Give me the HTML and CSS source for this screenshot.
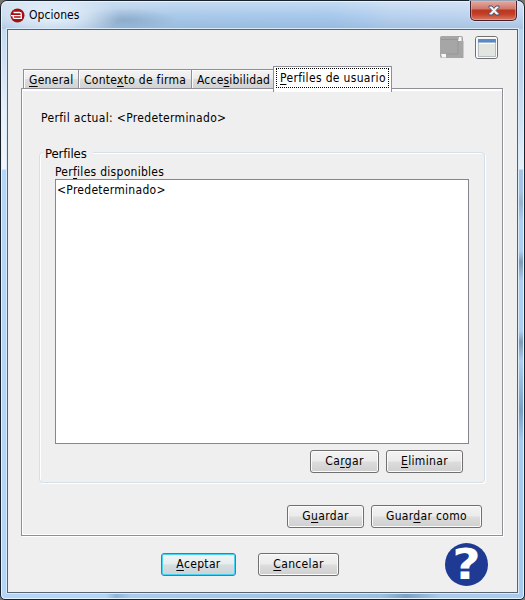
FILE: index.html
```html
<!DOCTYPE html>
<html lang="es">
<head>
<meta charset="utf-8">
<title>Opciones</title>
<link rel="stylesheet" href="styles.css">
</head>
<body>
<div class="window">
  <header class="titlebar">
    <svg class="app-icon" width="15" height="15" viewBox="0 0 15 15"><circle cx="7.5" cy="7.5" r="7" fill="#a50f12"/><path d="M3.5 4.500h6q1.800 0 1.800 1.500v4.300H4.500q-1.400 0-1.400-1.300 0-1.400 1.400-1.400h7M1 7.600h3" fill="none" stroke="#fff" stroke-width="1.300"/></svg>
    <h1 class="title"><span>Opciones</span></h1>
    <button class="close" aria-label="Cerrar"><svg width="12" height="11" viewBox="0 0 12 11"><path d="M1 1h3l2 2.400L8 1h3v1.400L8 5.500l3 3.100V10H8L6 7.700 4 10H1V8.600l3-3.100-3-3.100z" fill="#f5f5f5" stroke="#46536b"/></svg></button>
  </header>
  <main class="client">
    <div class="tools">
      <svg width="24" height="23" viewBox="0 0 24 23"><rect width="23" height="22" rx="2" fill="#a4a4a4"/><path d="M0 17.500V3q0-3 3-3h15v5h5.500v17H6v-4.500z" fill="#a6a6a6"/><path d="M1 3.500h17v14.500H6" fill="none" stroke="#969696"/><path d="M19 1h2.500v4H18zM1 18h5v3.500H2z" fill="#f7f7f7"/></svg>
      <svg width="23" height="23" viewBox="0 0 23 23"><rect x=".5" y=".5" width="22" height="22" rx="2.500" fill="#f3f3f3" stroke="#707070"/><rect x="1.500" y="1.500" width="20" height="20" rx="1.500" fill="none" stroke="#fcfcfc"/><rect x="3.500" y="3.500" width="17" height="17" fill="#e2e5e0" stroke="#b7bdc2"/><path d="M3 3h18v3.500H3z" fill="#5b8bc7"/><path d="M4 7.500h16" stroke="#fff"/></svg>
    </div>
    <nav class="tabs">
      <div class="tab general"><span><u>G</u>eneral</span></div>
      <div class="tab contexto"><span>Conte<u>x</u>to de firma</span></div>
      <div class="tab acces"><span>Acce<u>s</u>ibilidad</span></div>
      <div class="tab active"><span><u>P</u>erfiles de usuario</span></div>
    </nav>
    <section class="pane">
      <p class="current">Perfil actual: &lt;Predeterminado&gt;</p>
      <div class="group">
        <h2 class="legend"><span>Perfiles</span></h2>
        <p class="list-label"><span>Per<u>f</u>iles disponibles</span></p>
        <div class="list"><span>&lt;Predeterminado&gt;</span></div>
        <div class="row">
          <button class="btn load"><span>Ca<u>r</u>gar</span></button>
          <button class="btn delete"><span><u>E</u>liminar</span></button>
        </div>
      </div>
      <div class="row save-row">
        <button class="btn save"><span>G<u>u</u>ardar</span></button>
        <button class="btn save-as"><span>Guar<u>d</u>ar como</span></button>
      </div>
    </section>
    <footer class="footer">
      <button class="btn accept"><span><u>A</u>ceptar</span></button>
      <button class="btn cancel"><span><u>C</u>ancelar</span></button>
      <div class="help"><span>?</span></div>
    </footer>
  </main>
</div>
</body>
</html>
```
FILE: styles.css
```css
* { box-sizing: border-box; }
body {
  margin: 0;
  background: #77736f;
  color: #000;
  font: 12px/15px "DejaVu Sans Condensed", "DejaVu Sans", sans-serif;
  font-stretch: condensed;
  letter-spacing: .28px;
}
h1, h2, p { margin: 0; font-size: 12px; font-weight: normal; }
u { text-decoration: underline; text-underline-offset: 2px; text-decoration-thickness: 1px; text-decoration-skip-ink: none; }
.window {
  width: 525px;
  height: 600px;
  padding: 0 6px 6px;
  border: 1px solid #18222d;
  border-radius: 7px 7px 5px 5px;
  box-shadow: inset 0 0 0 1px #e6f3ff;
  background:
    linear-gradient(#bad3ef 0, #d0e0f3 60px, #e8eff9 110px, #f4f6fa 168px, transparent 169px) left / 8px 100% no-repeat,
    linear-gradient(#bad3ef 0, #bcd3ef 70px, #d8e7f6 140px, #e8f0f8 168px, #a5c4e4 169px, #a5c4e4 190px, #96b2d0 202px, #acceef 220px, #acceef 250px, #7f99b8 261px, #acceef 280px, #acceef 330px, #7f99b8 341px, #acceef 360px, #7c9fc0 410px, #a8cbed 440px, #a8cbed) right / 8px 100% no-repeat,
    linear-gradient(90deg, transparent 105px, #8db4dc 115px, #a9cbed 130px, #9bc0e3 380px, #7ba0c5 405px, #a9cbed 440px) bottom / 100% 8px no-repeat,
    #b3d5f9;
}
.titlebar {
  display: flex;
  align-items: flex-start;
  height: 28px;
  margin: 0 -5px;
  padding: 7px 6px 0 7px;
  border-top: 1px solid #e6f3ff;
  border-radius: 6px 6px 0 0;
  background:
    radial-gradient(ellipse 68px 24px at 50px 14px, #e6f0fa, #e6f0fa99 50%, transparent),
    radial-gradient(ellipse 52px 12px at 122px 18px, #7594b488, transparent),
    linear-gradient(#ffffff55, transparent 14px, #6d94b944 27px),
    linear-gradient(90deg, #bfd4eb, #a9c9e9 170px, #a6c8ec 330px, #b8d1ee 390px, #c0d5ef);
}
.app-icon { flex: none; margin-left: 1px; margin-top: -1px; }
.title { margin: -1px 0 0 4px; line-height: 15px; white-space: nowrap; letter-spacing: .05px; }
.close {
  display: grid;
  place-items: center;
  width: 47px;
  height: 20px;
  margin: -8px 0 0 auto;
  padding: 0 0 1px;
  border: 1px solid #47202b;
  border-top: 0;
  border-radius: 0 0 5px 5px;
  background: linear-gradient(#e4aaa2, #cf766a 8px, #b93722 9px, #c43d26 13px, #d97b63);
  box-shadow: inset 0 0 0 1px #f1b3a888, 0 0 0 1px #d5e4f4aa;
}
.client {
  width: 511px;
  height: 564px;
  border: 1px solid #566370;
  background: #efefef;
  box-shadow: 0 0 0 1px #d9ebfb;
}
.tools { display: flex; gap: 11px; height: 36px; padding: 6px 19px 0 0; justify-content: flex-end; }
.tabs { display: flex; align-items: flex-end; height: 23px; margin-left: 15px; position: relative; z-index: 1; }
.tab {
  height: 20px;
  padding: 3px 0 0 5px;
  border: 1px solid #8e8f99;
  border-right: 0;
  background: linear-gradient(#f4f4f4, #ebebeb 50%, #dddddd 52%, #d2d2d2);
  box-shadow: inset 1px 1px #fcfcfc;
  white-space: nowrap;
}
.general { width: 55px; }
.contexto { width: 113px; }
.acces { width: 82px; letter-spacing: .2px; }
.active {
  width: 119px;
  height: 26px;
  margin-bottom: -3px;
  padding: 1px 2px 2px;
  border-right: 1px solid #8e8f99;
  border-bottom: 0;
  background: #fff;
}
.active span { display: block; height: 20px; padding: 2px 0 0 3px; border: 1px dotted #000; letter-spacing: .33px; }
.pane {
  width: 482px;
  height: 448px;
  margin: -1px 0 0 13px;
  border: 1px solid #8e8f99;
  box-shadow: inset 0 2px #fff, inset 1px -1px #fff, 1px 1px #fff;
}
.current { padding: 22px 0 0 19px; white-space: nowrap; letter-spacing: .34px; }
.group {
  width: 446px;
  height: 331px;
  margin: 26px 0 0 17px;
  padding: 0 16px 0 15px;
  border: 1px solid #d5dfe8;
  border-radius: 4px;
  box-shadow: inset 1px 1px #fff, 1px 1px #fff;
}
.legend { width: 50px; height: 15px; margin: -7px 0 0 -12px; padding-left: 2px; background: #efefef; white-space: nowrap; font-size: 13px; letter-spacing: -.1px; }
.list-label { height: 14px; margin-top: 4px; white-space: nowrap; }
.list { width: 414px; height: 265px; margin: 0 0 6px; padding: 3px 1px; border: 1px solid #828790; background: #fff; }
.row { display: flex; justify-content: flex-end; gap: 7px; }
.group .row { margin-right: 5px; }
.save-row { margin: 22px 20px 0 0; }
.btn {
  height: 23px;
  padding: 0;
  border: 1px solid #707070;
  border-radius: 3px;
  background: linear-gradient(#f3f3f3, #ebebeb 49%, #dddddd 51%, #cfcfcf);
  box-shadow: inset 0 0 0 1px #fbfbfb;
  color: #000;
  font: inherit;
  letter-spacing: .34px;
  white-space: nowrap;
}
.load { width: 69px; }
.delete { width: 77px; }
.save { width: 77px; }
.save-as { width: 111px; }
.accept { width: 75px; border-color: #3c7fb1; box-shadow: inset 0 0 0 1px #48d2f3; background: linear-gradient(#f2f5f6, #e6ecee 49%, #d5dee1 51%, #ccd3d6); }
.cancel { width: 81px; margin-left: 22px; }
.footer { display: flex; padding: 17px 0 0 153px; }
.help {
  width: 43px;
  height: 43px;
  margin: -10px 0 0 106px;
  border-radius: 50%;
  background: #1f3a93;
  color: #fff;
  font: bold 43px/43px "DejaVu Sans", sans-serif;
  letter-spacing: 0;
  text-align: center;
}
.help span { display: block; transform: scaleX(1.14); }
```
